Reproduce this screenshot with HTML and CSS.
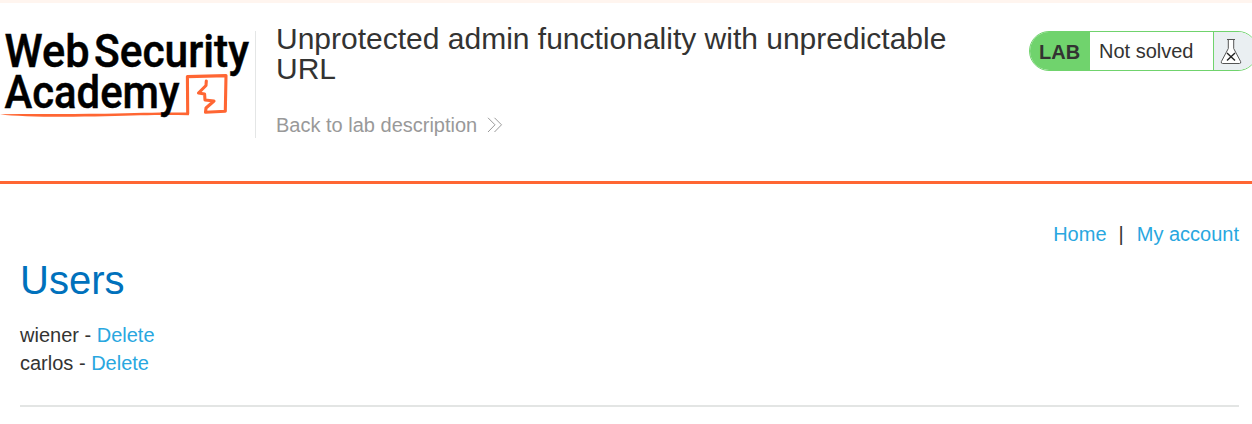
FILE: index.html
```
<!DOCTYPE html>
<html lang="en">
<head>
<meta charset="utf-8">
<title>Unprotected admin functionality with unpredictable URL</title>
<link rel="stylesheet" href="styles.css">
</head>
<body>
<header class="lab-header">
  <svg class="logo" width="255" height="108" viewBox="0 0 255 108" role="img" aria-label="Web Security Academy">
    <g class="logo-mark">
      <path class="underline" d="M0 83.2C35 82.6 70 83.2 105 82.8C140 81.6 165 81.3 189 81.5L188.8 84.2C165 83.6 145 84 105 85.2C70 86 20 86.2 0 83.2Z"/>
      <path d="M187.7 82.5L187.4 45.6L226 44.6L225.3 80.2L205.5 81.3L206 77L214 70L205 69L204.6 63L198.5 62L206 54.5L206.3 50"/>
    </g>
    <g class="logo-text">
      <text x="4.5" y="36" textLength="85" lengthAdjust="spacingAndGlyphs">Web</text>
      <text x="94" y="36" textLength="155" lengthAdjust="spacingAndGlyphs">Security</text>
      <text x="4.5" y="76.7" textLength="175" lengthAdjust="spacingAndGlyphs">Academy</text>
    </g>
  </svg>
  <div class="title">
    <h2>Unprotected admin functionality with unpredictable URL</h2>
    <a class="back" href="#">Back to lab description
      <svg width="16" height="16" viewBox="0 0 16 16"><path d="M1 .8L8 7.8L1 15M7.5 .8L14.5 7.8L7.5 15"/></svg>
    </a>
  </div>
  <div class="status">
    <span class="lab">LAB</span>
    <p>Not solved</p>
    <span class="flask">
      <svg width="22" height="28" viewBox="0 0 22 28"><path class="glass" d="M7 1.5H15M8.3 2V10.5L1.4 23.5Q.7 25.5 2.6 25.5H19.4Q21.3 25.5 20.6 23.5L13.7 10.5V2"/><path class="cross" d="M7 15L15 22.5M15 15L7 22.5"/></svg>
    </span>
  </div>
</header>
<main class="content">
  <nav class="links"><a href="#">Home</a><span>|</span><a href="#">My account</a></nav>
  <h1>Users</h1>
  <div class="user">wiener - <a href="#">Delete</a></div>
  <div class="user">carlos - <a href="#">Delete</a></div>
  <hr>
</main>
</body>
</html>
```
FILE: styles.css
```
* { box-sizing: border-box; }
body {
  margin: 0;
  overflow: hidden;
  background: #fff;
  color: #333332;
  font: 20px/28px "Liberation Sans", Arial, sans-serif;
}
a { color: #29a7df; text-decoration: none; }
.lab-header {
  display: flex;
  align-items: flex-start;
  height: 184px;
  padding-top: 28px;
  border-top: 3px solid #fff5ef;
  border-bottom: 3px solid #ff6633;
}
.logo { flex: none; overflow: visible; }
.logo-text {
  font: 500 47px Roboto, sans-serif;
  fill: #000;
  stroke: #000;
  stroke-width: .5;
}
.logo-mark {
  fill: none;
  stroke: #ff6633;
  stroke-width: 3.1;
  stroke-linejoin: round;
  stroke-linecap: round;
}
.underline { fill: #ff6633; stroke: none; }
.title {
  flex: none;
  width: 774px;
  height: 107px;
  padding: 0 80px 0 20px;
  border-left: 1px solid #e4e6e6;
}
h2 { margin: -7px 0 27px; font-size: 30px; line-height: 30px; font-weight: 400; }
.back { display: flex; align-items: center; gap: 10px; color: #999; }
.back svg { fill: none; stroke: #999; stroke-width: 1; }
.status {
  display: flex;
  flex: none;
  width: 229px;
  height: 40px;
  border: 1px solid #70d36d;
  border-radius: 20px;
  overflow: hidden;
}
.lab {
  width: 60px;
  padding-left: 9px;
  background: #70d36d;
  font-weight: 700;
  line-height: 40px;
}
.status p { width: 123px; margin: 0; padding-left: 9px; line-height: 38px; }
.flask {
  flex: 1;
  padding: 6px 0 0 6px;
  border-left: 1px solid #70d36d;
  background: #eaeff2;
  line-height: 0;
}
.glass { fill: #fff; stroke: #555; stroke-width: 1; }
.cross { fill: none; stroke: #222; stroke-width: 1.4; }
.content { padding: 36px 13px 0 20px; }
.links { display: flex; justify-content: flex-end; }
.links span { margin: 0 13px 0 12px; }
h1 { margin: 8px 0 17px; color: #0071bc; font-size: 40px; line-height: 48px; font-weight: 400; }
hr { height: 2px; margin: 28px 0 0; border: 0; background: #e3e5e4; }
```
